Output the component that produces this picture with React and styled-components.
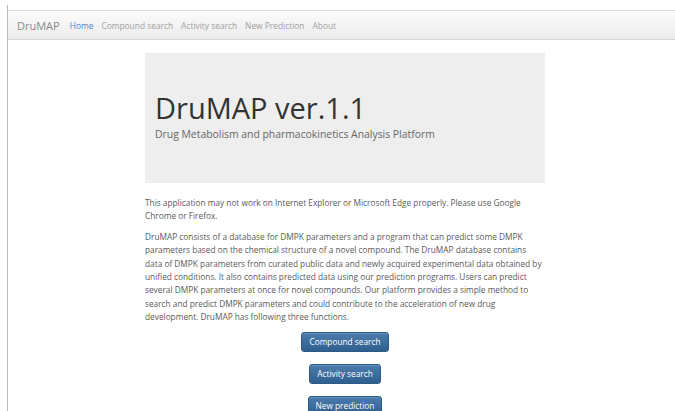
import React from 'react'
import styled, { createGlobalStyle } from 'styled-components'

const GlobalStyle = createGlobalStyle`
  html, body {
    margin: 0;
    padding: 0;
    background: #fff;
  }
  body {
    font-family: "Open Sans", "Liberation Sans", sans-serif;
  }
`

const Page = styled.div`
  margin: 5px 0 0 7px;
  padding-top: 5px;
  border-left: 1px solid #b9b9b9;
  min-height: 406px;
  box-sizing: border-box;
`

const Navbar = styled.nav`
  height: 30px;
  box-sizing: border-box;
  display: flex;
  align-items: center;
  padding-left: 9px;
  background: linear-gradient(to bottom, #fbfbfb 0%, #ececec 100%);
  border-top: 1px solid #dcdcdc;
  border-bottom: 1px solid #d6d6d6;
`

const Brand = styled.span`
  font-size: 11px;
  color: #8a8a8a;
  margin-right: 10px;
`

const NavLink = styled.a`
  font-size: 8.4px;
  color: ${p => (p.active ? '#4f87c9' : '#a0a0a0')};
  margin-right: 8px;
  text-decoration: none;
`

const Main = styled.main`
  padding-left: 7px;
`

const Container = styled.div`
  width: 400px;
  margin: 0 auto;
`

const Jumbotron = styled.div`
  margin-top: 13px;
  height: 130px;
  box-sizing: border-box;
  background: #eeeeee;
  padding: 37px 10px 0;
`

const Title = styled.h1`
  margin: 0;
  font-weight: 400;
  font-size: 29px;
  line-height: 36px;
  color: #333;
`

const Subtitle = styled.p`
  margin: 1px 0 0;
  font-size: 10.4px;
  color: #666;
`

const Text = styled.p`
  margin: 13px 0 0;
  font-size: 8.3px;
  line-height: 13.4px;
  color: #5a5a5a;

  & + & {
    margin-top: 7px;
  }
`

const Actions = styled.div`
  display: flex;
  flex-direction: column;
  align-items: center;
  gap: 12px;
  margin-top: 8px;
`

const Button = styled.button`
  height: 20px;
  padding: 0 7px;
  font-family: inherit;
  font-size: 8.3px;
  color: #fff;
  border: 1px solid #2b5a86;
  border-radius: 3px;
  background: linear-gradient(to bottom, #4b7cad 0%, #2f5f8f 100%);
  box-shadow: inset 0 1px 0 rgba(255, 255, 255, 0.15);
  cursor: pointer;
`

const navItems = ['Compound search', 'Activity search', 'New Prediction', 'About']

export default function App() {
  return (
    <>
      <GlobalStyle />
      <Page>
        <Navbar>
          <Brand>DruMAP</Brand>
          <NavLink active>Home</NavLink>
          {navItems.map(item => (
            <NavLink key={item}>{item}</NavLink>
          ))}
        </Navbar>
        <Main>
          <Container>
            <Jumbotron>
              <Title>DruMAP ver.1.1</Title>
              <Subtitle>Drug Metabolism and pharmacokinetics Analysis Platform</Subtitle>
            </Jumbotron>
            <Text>
              This application may not work on Internet Explorer or Microsoft Edge properly. Please use Google
              Chrome or Firefox.
            </Text>
            <Text>
              DruMAP consists of a database for DMPK parameters and a program that can predict some DMPK
              parameters based on the chemical structure of a novel compound. The DruMAP database contains
              data of DMPK parameters from curated public data and newly acquired experimental data obtained by
              unified conditions. It also contains predicted data using our prediction programs. Users can predict
              several DMPK parameters at once for novel compounds. Our platform provides a simple method to
              search and predict DMPK parameters and could contribute to the acceleration of new drug
              development. DruMAP has following three functions.
            </Text>
            <Actions>
              <Button>Compound search</Button>
              <Button>Activity search</Button>
              <Button>New prediction</Button>
            </Actions>
          </Container>
        </Main>
      </Page>
    </>
  )
}
